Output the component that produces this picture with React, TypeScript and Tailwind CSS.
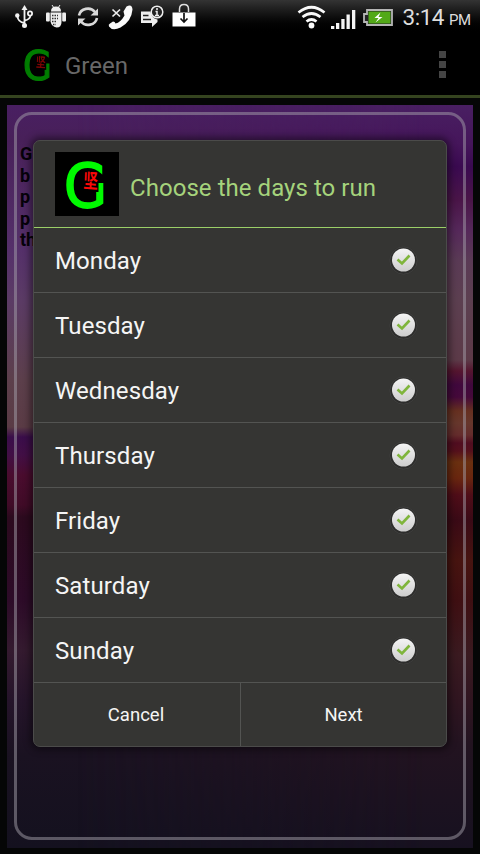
import React from 'react';

const days = ['Monday', 'Tuesday', 'Wednesday', 'Thursday', 'Friday', 'Saturday', 'Sunday'];

function Logo({ className }: { className: string }) {
  return (
    <svg viewBox="0 0 64 64" className={className}>
      <rect width="64" height="64" fill="#000" />
      <g transform="translate(9 55) scale(.91 1)">
        <text fontFamily="DejaVu Sans" fontSize="61" fill="#00fa00" stroke="#00fa00" strokeWidth="1.8">G</text>
      </g>
      <rect x="27" y="26" width="16.500" height="14" fill="#000" />
      <g transform="translate(28 35.500) scale(.82 1.1) rotate(3)">
        <text fontFamily="Noto Sans CJK SC, sans-serif" fontWeight="700" fontSize="18" fill="#fa0808">坚</text>
      </g>
    </svg>
  );
}

function StatusBar() {
  return (
    <header className="h-[34px] shrink-0 bg-gradient-to-b from-[#343434] to-black">
      <svg viewBox="0 0 480 34" width="480" height="34" fill="none">
        <g stroke="#f2f2f2" strokeWidth="1.8">
          <path d="M24.500 8v17M24.500 23q-6.500-1-7-6.500M24.500 20.500q5.500-1 6-5" />
          <circle cx="30" cy="13.500" r="2.100" />
        </g>
        <path d="M24.500 5l3 5h-6z" fill="#f2f2f2" />
        <circle cx="17.300" cy="15.500" r="2.200" fill="#f2f2f2" />
        <circle cx="24.500" cy="25.500" r="2.500" fill="#f2f2f2" />
        <g fill="#eee">
          <path d="M51 11.500q0-5 5-5t5 5z" />
          <path d="M50.500 12.500h11V22q0 5.500-5 5.500-5-1-6-6z" />
          <rect x="46" y="12.500" width="3.800" height="9" rx="1" />
          <rect x="62.200" y="12.500" width="3.800" height="9" rx="1" />
          <path d="M52 5l2 3M60 5l-2 3" stroke="#eee" />
        </g>
        <path d="M52 15.500h6M52 18.500h6M52 21.500h5M53 24.500h3" stroke="#333" strokeWidth="1.700" strokeDasharray="1.500 1" />
        <g stroke="#d8d8d8" strokeWidth="2.600">
          <path d="M79 15.500a9 8.500 0 0 1 16-3.500M97 18a9 8.500 0 0 1-16 3.500" />
        </g>
        <path d="M98 8.500v7h-7.500zM78 25.500v-7h7.500z" fill="#d8d8d8" />
        <path d="M126.500 6.500q5.500-3 6 3-1 12-12 18-8 4-11.500-1-1-2 1-3l3-2q2 0 2.500 2 5-1 9-8l-1-4z" fill="#fafafa" />
        <path d="M112.500 9.500l7.500 7M120 9.500l-7.500 7" stroke="#eee" strokeWidth="1.700" />
        <path d="M141 11.500h9.500q1 7 7 8v2.500l-5.500 5v-4h-11z" fill="#eee" />
        <path d="M143 15.500h5.500M143 19.500h8" stroke="#222" strokeWidth="1.500" />
        <circle cx="157" cy="12" r="5.800" stroke="#eee" strokeWidth="1.500" fill="#222" />
        <path d="M157 8v2M155.500 11.500h1.500v4M155 15.500h4" stroke="#eee" strokeWidth="1.500" />
        <path d="M172.500 12.500h23v14h-23z" fill="#fff" />
        <path d="M179.500 12V9q0-4.500 4.500-4.500t4.500 4.500v3" stroke="#ddd" strokeWidth="1.500" />
        <path d="M184 13v9M180.500 18.500l3.500 3.500 3.500-3.500" stroke="#111" strokeWidth="1.700" />
        <g stroke="#fafafa" strokeWidth="2.700">
          <path d="M298.500 12.500q13-10.500 26 0M302.500 17q9-7 18 0M306.500 21.500q5-4 10 0" />
        </g>
        <circle cx="311.500" cy="25.500" r="2.900" fill="#fafafa" />
        <path d="M331 26h3.300v3H331zM336 23h3.300v6H336zM341.300 19h3.300v10h-3.300zM346.500 14.500h3.300V29h-3.300zM352 10h3.300v19H352z" fill="#f5f5f5" />
        <path d="M367 10h25v15h-25v-3h-3v-8h3z" fill="#252525" stroke="#b5b5b5" strokeWidth="1.800" />
        <rect x="368.500" y="11.500" width="22" height="12" fill="#52a918" />
        <path d="M380.500 12.500l-6 5.500h4l-3 4.500 7-5.500h-4z" fill="#fff" />
        <text x="402.500" y="25" fill="#dedede" fontFamily="Roboto" fontSize="22.500" textLength="42">3:14</text>
        <text x="449" y="25" fill="#dedede" fontFamily="Roboto" fontSize="15" textLength="22">PM</text>
      </svg>
    </header>
  );
}

function Check() {
  return (
    <svg viewBox="0 0 32 32" className="size-8">
      <defs>
        <linearGradient id="disc" x1="0" y1="0" x2="0" y2="1">
          <stop stopColor="#f4f4f4" />
          <stop offset="1" stopColor="#cdcdcd" />
        </linearGradient>
      </defs>
      <circle cx="16.500" cy="16.500" r="14" fill="#2d2d2c" />
      <circle cx="16.500" cy="16.500" r="13.700" fill="none" stroke="#444443" strokeWidth=".8" />
      <circle cx="16.500" cy="16" r="11.500" fill="url(#disc)" />
      <path d="M10.500 15.500l4.500 4 7.500-8" fill="none" stroke="#7fb53b" strokeWidth="2.600" />
    </svg>
  );
}

function Wallpaper() {
  return (
    <section className="relative mx-[7px] mt-[7px] h-[743px] overflow-hidden bg-[linear-gradient(to_bottom,#491f62_0px,#482059_35px,#55306a_145px,#5b3b65_195px,#5c3f4b_275px,#5a3b45_322px,#3a0d4a_332px,#420f45_350px,#4a0c2e_370px,#400b27_400px,#2c0a1e_412px,#2d0b28_495px,#341a2f_545px,#25142a_595px,#1a1221_650px,#14111f_743px)] p-[7px]">
      <div className="absolute inset-0 bg-[linear-gradient(to_bottom,#491f62_0px,#45155a_40px,#3a0a50_62px,#4a1548_95px,#55285a_125px,#5a3a55_155px,#5c3f50_195px,#5c3a48_255px,#55152f_266px,#40083d_280px,#45093a_292px,#663020_306px,#66372c_318px,#642c2c_330px,#500d20_338px,#55101c_346px,#6a3010_357px,#69260f_373px,#4f0d18_390px,#3a0a16_415px,#471410_455px,#3f0f12_495px,#3a1a20_550px,#301520_595px,#221320_640px,#171120_743px)] [mask-image:linear-gradient(to_right,transparent_15%,black_90%)]" />
      <div className="relative h-[728px] w-[452px] overflow-hidden rounded-[18px] border-[3px] border-[#a3a0aa]/50 pl-[3px] pt-[28px] font-[Roboto,sans-serif] text-[18px] font-bold leading-[21.5px] text-[#06020a]">
        <p>G</p>
        <p>b</p>
        <p>p</p>
        <p>p</p>
        <p>th</p>
      </div>
    </section>
  );
}

function Dialog() {
  return (
    <div className="absolute left-[33px] top-[140px] flex h-[607px] w-[414px] flex-col overflow-hidden rounded-[7px] border border-[#4b4b4a] bg-[#353533] font-[Roboto,sans-serif] text-[#f5f5f5] shadow-[0_0_7px_3px_rgba(0,0,0,0.45)]">
      <div className="flex h-[87px] shrink-0 items-center border-b border-[#9bcf68] pl-[21px]">
        <Logo className="size-16" />
        <h1 className="ml-[11px] mt-[7px] whitespace-nowrap text-[24px] tracking-[0.05px] text-[#a5d37c]">Choose the days to run</h1>
      </div>
      {days.map((day) => (
        <div key={day} className="flex h-[65px] shrink-0 items-center justify-between border-b border-[#535452] pl-[21px] pr-[27px] text-[24px] tracking-[0.1px]">
          <span className="pt-px">{day}</span>
          <Check />
        </div>
      ))}
      <div className="flex grow text-[18.5px]">
        <button className="w-[207px] border-r border-[#535452] pr-[2px] pt-[2px]">Cancel</button>
        <button className="grow pt-[2px]">Next</button>
      </div>
    </div>
  );
}

export default function App() {
  return (
    <main className="relative flex h-[854px] w-[480px] flex-col overflow-hidden bg-[#050606]">
      <StatusBar />
      <div className="flex h-[64px] shrink-0 items-center border-b-[3px] border-[#35441f] bg-black pl-[17px]">
        <div className="opacity-50"><Logo className="size-[43px]" /></div>
        <span className="ml-[5px] pt-[3px] font-[Roboto,sans-serif] text-[24px] text-[#686868]">Green</span>
        <div className="ml-auto mr-[34px] flex flex-col gap-[3px]">
          <i className="size-[7px] bg-[#454545]" />
          <i className="size-[7px] bg-[#454545]" />
          <i className="size-[7px] bg-[#454545]" />
        </div>
      </div>
      <Wallpaper />
      <Dialog />
    </main>
  );
}
